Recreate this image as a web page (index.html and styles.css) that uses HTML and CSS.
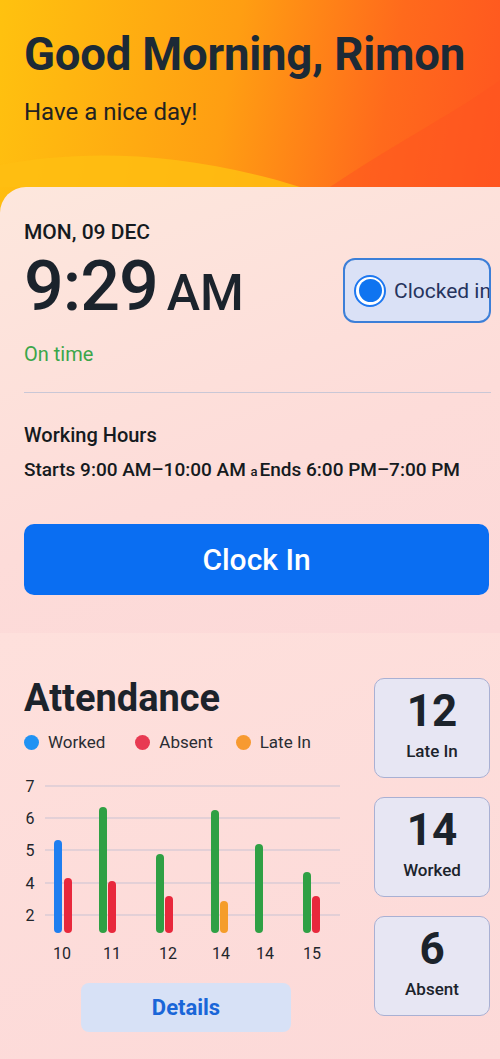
FILE: index.html
```html
<!DOCTYPE html>
<html>
<head>
<meta charset="utf-8">
<link rel="stylesheet" href="styles.css">
</head>
<body>
<div class="page">
  <header class="hero">
    <svg class="hero-wave" viewBox="0 0 500 187" preserveAspectRatio="none">
      <path d="M0 165 C 80 150, 180 150, 300 187 L 0 187 Z" fill="#ffbe12" opacity="0.85"/>
      <path d="M330 187 C 400 140, 460 110, 500 80 L 500 187 Z" fill="#ff5420" opacity="0.5"/>
    </svg>
    <h1 class="hero-title">Good Morning, Rimon</h1>
    <p class="hero-sub">Have a nice day!</p>
  </header>

  <section class="card">
    <div class="clock-row">
      <div class="clock-info">
        <div class="date">MON, 09 DEC</div>
        <div class="time"><span class="time-num">9:29</span><span class="time-ampm">AM</span></div>
        <div class="status">On time</div>
      </div>
      <div class="pill">
        <span class="radio"><span class="radio-dot"></span></span>
        <span class="pill-text">Clocked in</span>
      </div>
    </div>
    <div class="divider"></div>
    <div class="hours-title">Working Hours</div>
    <div class="hours">Starts 9:00 AM–10:00 AM <span class="sep">a</span>Ends 6:00 PM–7:00 PM</div>
    <button class="clock-btn">Clock In</button>
  </section>

  <section class="attendance">
    <div class="att-left">
      <h2 class="att-title">Attendance</h2>
      <div class="legend">
        <span class="leg"><span class="dot dot-blue"></span>Worked</span>
        <span class="leg leg-mid"><span class="dot dot-red"></span>Absent</span>
        <span class="leg"><span class="dot dot-orange"></span>Late In</span>
      </div>
      <svg class="chart" width="325" height="192" viewBox="0 0 325 192">
        <g stroke="#c9c3d3" stroke-width="1">
          <line x1="25" y1="11" x2="320" y2="11"/>
          <line x1="25" y1="43" x2="320" y2="43"/>
          <line x1="25" y1="75" x2="320" y2="75"/>
          <line x1="25" y1="108" x2="320" y2="108"/>
          <line x1="25" y1="140" x2="320" y2="140"/>
        </g>
        <g class="axis" text-anchor="middle">
          <text x="10" y="17">7</text>
          <text x="10" y="49">6</text>
          <text x="10" y="81">5</text>
          <text x="10" y="114">4</text>
          <text x="10" y="146">2</text>
        </g>
        <g>
          <rect x="34" y="65" width="8" height="93" rx="4" fill="#1e7ef0"/>
          <rect x="44" y="103" width="8" height="55" rx="4" fill="#e8283c"/>
          <rect x="79" y="32" width="8" height="126" rx="4" fill="#2fa044"/>
          <rect x="88" y="106" width="8" height="52" rx="4" fill="#e8283c"/>
          <rect x="136" y="79" width="8" height="79" rx="4" fill="#2fa044"/>
          <rect x="145" y="121" width="8" height="37" rx="4" fill="#e8283c"/>
          <rect x="191" y="35" width="8" height="123" rx="4" fill="#2fa044"/>
          <rect x="200" y="126" width="8" height="32" rx="4" fill="#f59d2a"/>
          <rect x="235" y="69" width="8" height="89" rx="4" fill="#2fa044"/>
          <rect x="283" y="97" width="8" height="61" rx="4" fill="#2fa044"/>
          <rect x="292" y="121" width="8" height="37" rx="4" fill="#e8283c"/>
        </g>
        <g class="axis" text-anchor="middle">
          <text x="42" y="184">10</text>
          <text x="92" y="184">11</text>
          <text x="148" y="184">12</text>
          <text x="201" y="184">14</text>
          <text x="245" y="184">14</text>
          <text x="292" y="184">15</text>
        </g>
      </svg>
      <button class="details-btn">Details</button>
    </div>
    <div class="stats">
      <div class="stat"><div class="stat-num">12</div><div class="stat-label">Late In</div></div>
      <div class="stat"><div class="stat-num">14</div><div class="stat-label">Worked</div></div>
      <div class="stat"><div class="stat-num">6</div><div class="stat-label">Absent</div></div>
    </div>
  </section>
</div>
</body>
</html>
```

FILE: styles.css
```css
* { box-sizing: border-box; }
html, body { margin: 0; padding: 0; }
body {
  font-family: Roboto, "Noto Sans", "Liberation Sans", sans-serif;
  color: #1d232b;
  width: 500px;
  height: 1059px;
  overflow: hidden;
  background: #fcd9d8;
}
.page {
  background: linear-gradient(100deg, #ffc20f 0%, #ff9e12 45%, #ff6a1c 75%, #ff5420 100%);
  background-size: 100% 230px;
  background-repeat: no-repeat;
}
.hero {
  position: relative;
  height: 187px;
  padding: 27px 24px 0;
}
.hero-wave {
  position: absolute;
  left: 0; top: 0;
  width: 500px; height: 187px;
}
.hero-title {
  position: relative;
  margin: 0;
  font-size: 45.5px;
  font-weight: 700;
  line-height: 56px;
  color: #1c2a36;
  letter-spacing: -0.2px;
}
.hero-sub {
  position: relative;
  margin: 15px 0 0;
  font-size: 24px;
  line-height: 28px;
  color: #222;
}
.card {
  background: linear-gradient(160deg, #fde7dd 0%, #fddcd9 60%, #fcd8d8 100%);
  border-top-left-radius: 26px;
  padding: 33px 9px 38px 24px;
}
.clock-row {
  display: flex;
  justify-content: space-between;
  align-items: flex-start;
}
.date {
  font-size: 21px;
  font-weight: 500;
  line-height: 24px;
  color: #151a20;
}
.time {
  margin-top: 6px;
  line-height: 72px;
  color: #1b232c;
}
.time-num {
  font-size: 70px;
  font-weight: 500;
  letter-spacing: -1px;
}
.time-ampm {
  font-size: 50px;
  font-weight: 500;
  margin-left: 9px;
}
.status {
  margin-top: 1px;
  font-size: 20px;
  line-height: 24px;
  color: #3aa64a;
}
.pill {
  margin-top: 38px;
  width: 148px;
  height: 65px;
  border: 2px solid #3c7fd8;
  border-radius: 12px;
  background: #dae1f6;
  display: flex;
  align-items: center;
  padding-left: 9px;
  gap: 8px;
  overflow: hidden;
}
.radio {
  width: 32px; height: 32px;
  border-radius: 50%;
  border: 2px solid #1e78f0;
  background: #fff;
  display: flex;
  align-items: center;
  justify-content: center;
  flex: none;
}
.radio-dot {
  width: 23px; height: 23px;
  border-radius: 50%;
  background: #0f74f0;
}
.pill-text {
  font-size: 21px;
  color: #26345e;
  white-space: nowrap;
}
.divider {
  margin-top: 26px;
  height: 1px;
  background: #c9c7d6;
}
.hours-title {
  margin-top: 30px;
  font-size: 20px;
  font-weight: 500;
  line-height: 24px;
  color: #151a20;
}
.hours {
  margin-top: 11px;
  font-size: 19px;
  font-weight: 500;
  line-height: 24px;
  color: #151a20;
  white-space: nowrap;
}
.sep { font-size: 13px; margin-right: 2px; }
.clock-btn {
  display: block;
  margin-top: 40px;
  width: 465px;
  height: 71px;
  border: none;
  border-radius: 10px;
  background: #0a6ef2;
  color: #fff;
  font-family: inherit;
  font-size: 30px;
  font-weight: 500;
}
.attendance {
  background: linear-gradient(160deg, #fee0dc 0%, #fcd9d8 100%);
  display: flex;
  justify-content: space-between;
  padding: 43px 10px 0 24px;
  height: 426px;
}
.att-left {
  display: flex;
  flex-direction: column;
}
.att-title {
  margin: 0;
  font-size: 38px;
  font-weight: 700;
  line-height: 44px;
  color: #1c232b;
}
.legend {
  margin-top: 11px;
  display: flex;
  align-items: center;
  font-size: 17px;
  line-height: 22px;
  color: #2a2d33;
}
.leg { display: flex; align-items: center; gap: 9px; }
.leg-mid { margin: 0 23px 0 30px; }
.dot { width: 15px; height: 15px; border-radius: 50%; display: inline-block; }
.dot-blue { background: #2092f3; }
.dot-red { background: #e83a52; }
.dot-orange { background: #f79a30; }
.chart {
  display: block;
  margin-top: 22px;
  margin-left: -4px;
}
.axis text {
  font-family: Roboto, "Noto Sans", sans-serif;
  font-size: 16px;
  fill: #22262c;
}
.details-btn {
  margin-top: 16px;
  margin-left: 57px;
  width: 210px;
  height: 49px;
  border: none;
  border-radius: 8px;
  background: #d7e1f6;
  color: #1a66d8;
  font-family: inherit;
  font-size: 22px;
  font-weight: 700;
}
.stats {
  margin-top: 2px;
  display: flex;
  flex-direction: column;
  gap: 19px;
}
.stat {
  width: 116px;
  height: 100px;
  border: 1.5px solid #a9b0d3;
  border-radius: 10px;
  background: #e7e6f3;
  display: flex;
  flex-direction: column;
  align-items: center;
  padding-top: 8px;
}
.stat-num {
  font-size: 44px;
  font-weight: 700;
  line-height: 48px;
  color: #1c232b;
}
.stat-label {
  margin-top: 6px;
  font-size: 17px;
  font-weight: 500;
  line-height: 20px;
  color: #1c232b;
}
```
